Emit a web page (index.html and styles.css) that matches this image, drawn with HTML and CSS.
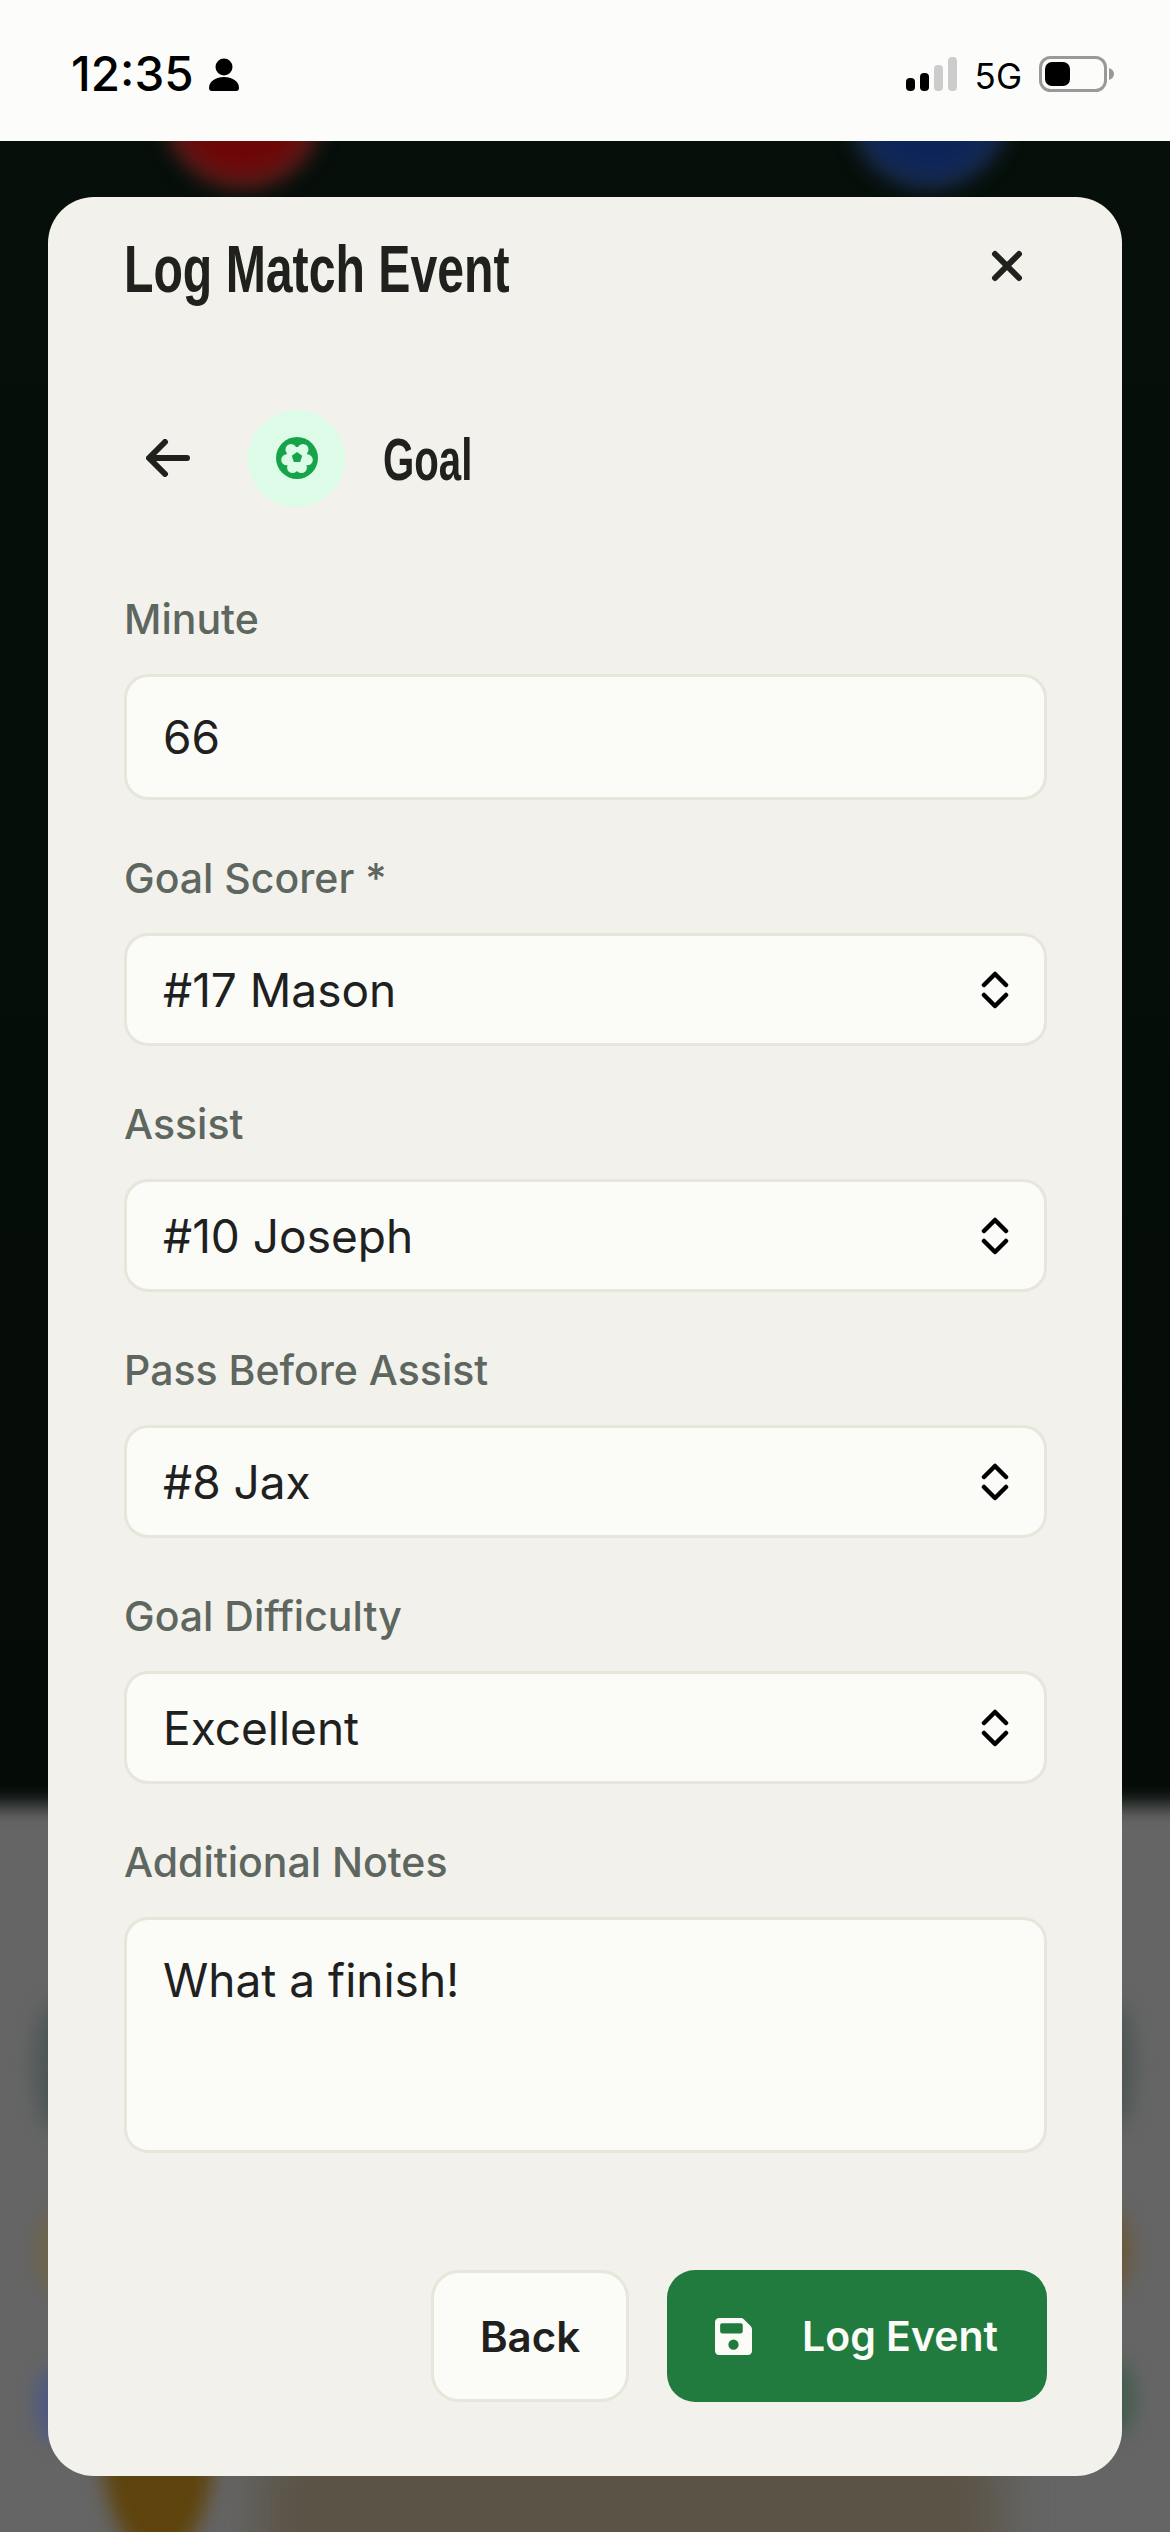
FILE: index.html
```html
<!DOCTYPE html>
<html lang="en">
<head>
  <meta charset="UTF-8">
  <meta name="viewport" content="width=device-width, initial-scale=1.0">
  <title>Log Match Event</title>
  <link rel="stylesheet" href="styles.css">
</head>
<body>
  <div class="status-bar">
    <div class="status-left">
      <span class="time">12:35</span>
      <svg class="person" viewBox="0 0 30 34"><circle cx="15" cy="9" r="8.5"/><path d="M0 30c0-7 7-11 15-11s15 4 15 11c0 2-1 3-3 3H3c-2 0-3-1-3-3z"/></svg>
    </div>
    <div class="status-right">
      <svg class="signal" viewBox="0 0 51 34"><rect x="0" y="21" width="9" height="13" rx="4"/><rect x="14" y="16" width="9" height="18" rx="4"/><rect class="off" x="28" y="8" width="9" height="26" rx="4"/><rect class="off" x="42" y="0" width="9" height="34" rx="4"/></svg>
      <span class="network">5G</span>
      <svg class="battery" viewBox="0 0 76 36"><rect x="1.5" y="1.5" width="65" height="33" rx="10" fill="none" stroke="#999" stroke-width="3"/><rect x="6" y="6" width="25" height="24" rx="7" fill="#000"/><path d="M70 12c3 1 5 3 5 6s-2 5-5 6z" fill="#999"/></svg>
    </div>
  </div>

  <div class="backdrop">
    <div class="blob blob-red"></div>
    <div class="blob blob-blue"></div>
    <div class="backdrop-light"></div>
    <div class="blob blob-amber"></div>
    <div class="blob blob-brown"></div>
    <div class="blob blob-left"></div>
    <div class="blob blob-left-tan"></div>
    <div class="blob blob-indigo"></div>
    <div class="blob blob-right"></div>
    <div class="blob blob-right-tan"></div>
    <div class="blob blob-green"></div>
  </div>

  <div class="modal">
    <div class="modal-head">
      <h1>Log Match Event</h1>
      <svg class="close" viewBox="0 0 32 32"><path d="M4 4l24 24M28 4L4 28"/></svg>
    </div>

    <div class="event-type">
      <svg class="back-arrow" viewBox="0 0 44 38"><path d="M41 19H4M19 3L3 19l16 16"/></svg>
      <div class="event-icon">
        <svg viewBox="0 0 42 42">
          <circle cx="21" cy="21" r="21" fill="#16a34a"/>
          <g fill="#dcfce7">
            <circle cx="21" cy="21" r="11"/>
            <circle cx="15" cy="12.4" r="5.5"/>
            <circle cx="27" cy="12.4" r="5.5"/>
            <circle cx="31.3" cy="22.8" r="5.5"/>
            <circle cx="25.4" cy="30.5" r="5.5"/>
            <circle cx="16.6" cy="30.5" r="5.5"/>
            <circle cx="10.7" cy="22.8" r="5.5"/>
          </g>
          <path d="M21 15l5.2 3.8-2 6.2h-6.4l-2-6.2z" fill="#16a34a"/>
        </svg>
      </div>
      <h2>Goal</h2>
    </div>

    <form class="event-form">
      <div class="field">
        <label>Minute</label>
        <div class="control control-input">66</div>
      </div>
      <div class="field">
        <label>Goal Scorer *</label>
        <div class="control control-select"><span>#17 Mason</span>
          <svg class="chevrons" viewBox="0 0 28 38"><path d="M3 14L14 3l11 11M3 24l11 11 11-11"/></svg>
        </div>
      </div>
      <div class="field">
        <label>Assist</label>
        <div class="control control-select"><span>#10 Joseph</span>
          <svg class="chevrons" viewBox="0 0 28 38"><path d="M3 14L14 3l11 11M3 24l11 11 11-11"/></svg>
        </div>
      </div>
      <div class="field">
        <label>Pass Before Assist</label>
        <div class="control control-select"><span>#8 Jax</span>
          <svg class="chevrons" viewBox="0 0 28 38"><path d="M3 14L14 3l11 11M3 24l11 11 11-11"/></svg>
        </div>
      </div>
      <div class="field">
        <label>Goal Difficulty</label>
        <div class="control control-select"><span>Excellent</span>
          <svg class="chevrons" viewBox="0 0 28 38"><path d="M3 14L14 3l11 11M3 24l11 11 11-11"/></svg>
        </div>
      </div>
      <div class="field">
        <label>Additional Notes</label>
        <div class="control control-textarea">What a finish!</div>
      </div>
    </form>

    <div class="actions">
      <button class="btn btn-back" type="button">Back</button>
      <button class="btn btn-log" type="button">
        <svg class="save" viewBox="0 0 36 36"><path fill-rule="evenodd" d="M4 0h21c1.200 0 2.200.5 3 1.200l6.800 6.800c.8.8 1.200 1.800 1.200 3V32c0 2.200-1.800 4-4 4H4c-2.200 0-4-1.800-4-4V4c0-2.200 1.800-4 4-4zm3 5c-1.200 0-2 .8-2 2v6c0 1.200.8 2 2 2h18c1.200 0 2-.8 2-2V7c0-1.200-.8-2-2-2zm11 16a5 5 0 1 0 0 10 5 5 0 0 0 0-10z"/></svg>
        <span>Log Event</span>
      </button>
    </div>
  </div>
</body>
</html>
```

FILE: styles.css
```css
* {
    box-sizing: border-box;
}

html, body {
    margin: 0;
    padding: 0;
}

body {
    width: 1170px;
    height: 2532px;
    overflow: hidden;
    position: relative;
    font-family: Inter, "Noto Sans", sans-serif;
    background-color: #656565;
    color: #20211e;
}

.status-bar {
    position: relative;
    z-index: 3;
    height: 141px;
    background-color: #fcfcfa;
    padding: 52px 55px 0 71px;
    display: flex;
    justify-content: space-between;
    color: #000;
}

.status-left,
.status-right {
    display: flex;
    align-items: flex-start;
}

.time {
    font-size: 47.5px;
    font-weight: 500;
    line-height: 44px;
}

.person {
    width: 30px;
    height: 34px;
    margin: 6px 0 0 15px;
    fill: #000;
}

.signal {
    width: 51px;
    height: 34px;
    margin: 5px 0 0 0;
    fill: #000;
}

.signal .off {
    fill: #ccc;
}

.network {
    font-size: 35px;
    line-height: 40px;
    margin: 4px 0 0 18px;
}

.battery {
    width: 76px;
    height: 36px;
    margin: 4px 0 0 17px;
}

.backdrop {
    position: absolute;
    inset: 141px 0 0 0;
    overflow: hidden;
    background: linear-gradient(#060f0a, #050c08 70%, #000);
}

.backdrop-light {
    position: absolute;
    left: -40px;
    right: -40px;
    top: 1664px;
    bottom: -40px;
    background-color: #656565;
    filter: blur(10px);
}

.blob {
    position: absolute;
    filter: blur(10px);
    border-radius: 50%;
}

.blob-red {
    left: 163px;
    top: -112px;
    width: 160px;
    height: 160px;
    background: radial-gradient(circle, #6d0606 50%, #4c3c38 85%);
}

.blob-blue {
    left: 849px;
    top: -112px;
    width: 160px;
    height: 160px;
    background: radial-gradient(circle, #0c2458 50%, #2d3a4c 85%);
}

.blob-amber {
    left: 100px;
    top: 2159px;
    width: 116px;
    height: 260px;
    background-color: #5e430c;
}

.blob-brown {
    left: 260px;
    top: 2300px;
    width: 740px;
    height: 200px;
    border-radius: 20px;
    background-color: #5b5346;
    filter: blur(24px);
}

.blob-left {
    left: 34px;
    top: 1860px;
    width: 44px;
    height: 130px;
    background-color: #4c5655;
}

.blob-left-tan {
    left: 38px;
    top: 2070px;
    width: 36px;
    height: 80px;
    background-color: #6f6345;
}

.blob-indigo {
    left: 36px;
    top: 2226px;
    width: 44px;
    height: 76px;
    background-color: #4c5884;
}

.blob-right {
    left: 1096px;
    top: 1860px;
    width: 38px;
    height: 130px;
    background-color: #4c5655;
}

.blob-right-tan {
    left: 1096px;
    top: 2070px;
    width: 34px;
    height: 80px;
    background-color: #6b5733;
}

.blob-green {
    left: 1096px;
    top: 2220px;
    width: 38px;
    height: 76px;
    background-color: #3f5c4c;
}

.modal {
    position: absolute;
    z-index: 2;
    left: 48px;
    top: 197px;
    width: 1074px;
    height: 2279px;
    background-color: #f2f1eb;
    border-radius: 46px;
    padding: 0 75px 0 76px;
}

.modal-head {
    display: flex;
    justify-content: space-between;
    align-items: flex-start;
    height: 178px;
}

h1 {
    margin: 34px 0 0 0;
    font-family: "Liberation Sans", sans-serif;
    font-size: 66px;
    line-height: 76px;
    font-weight: 700;
    color: #20211e;
    white-space: nowrap;
    transform: scaleX(0.73);
    transform-origin: left center;
}

.close {
    width: 32px;
    height: 32px;
    margin: 53px 24px 0 0;
    fill: none;
    stroke: #20211e;
    stroke-width: 6;
    stroke-linecap: round;
}

.event-type {
    display: flex;
    align-items: center;
    height: 96px;
    margin-top: 35px;
}

.back-arrow {
    width: 44px;
    height: 38px;
    margin-left: 22px;
    fill: none;
    stroke: #20211e;
    stroke-width: 6;
    stroke-linecap: round;
    stroke-linejoin: round;
}

.event-icon {
    width: 97px;
    height: 97px;
    margin-left: 58px;
    border-radius: 50%;
    background-color: #dcfce7;
    display: flex;
    align-items: center;
    justify-content: center;
}

.event-icon svg {
    width: 42px;
    height: 42px;
}

h2 {
    margin: 4px 0 0 38px;
    font-family: "Liberation Sans", sans-serif;
    font-size: 60px;
    line-height: 70px;
    font-weight: 700;
    color: #20211e;
    transform: scaleX(0.67);
    transform-origin: left center;
}

.event-form {
    margin-top: 35px;
    display: flex;
    flex-direction: column;
}

.field {
    display: flex;
    flex-direction: column;
}

label {
    display: block;
    padding: 54px 0 31px 0;
    font-size: 41px;
    line-height: 48px;
    font-weight: 500;
    color: #5e6660;
}

.control {
    width: 923px;
    background-color: #fbfbf8;
    border: 3px solid #e7e6da;
    border-radius: 24px;
    font-size: 46px;
    color: #20211e;
    padding: 0 36px;
    display: flex;
    align-items: center;
    justify-content: space-between;
}

.control-input {
    height: 126px;
}

.control-select {
    height: 113px;
}

.control-textarea {
    height: 236px;
    align-items: flex-start;
    padding-top: 32px;
    line-height: 56px;
}

.chevrons {
    width: 28px;
    height: 38px;
    margin-right: -1px;
    fill: none;
    stroke: #000;
    stroke-width: 4.5;
    stroke-linecap: round;
    stroke-linejoin: round;
}

.actions {
    display: flex;
    justify-content: flex-end;
    gap: 38px;
    margin-top: 117px;
}

.btn {
    height: 132px;
    border-radius: 28px;
    font-family: Inter, "Noto Sans", sans-serif;
    font-size: 42px;
    font-weight: 600;
    display: flex;
    align-items: center;
}

.btn-back {
    width: 198px;
    justify-content: center;
    background-color: #fbfbf8;
    border: 3px solid #e7e6da;
    color: #20211e;
}

.btn-log {
    width: 380px;
    padding: 0 0 0 48px;
    font-size: 41px;
    background-color: #217a3e;
    border: none;
    color: #fbfbf8;
}

.save {
    width: 37px;
    height: 37px;
    fill: #fbfbf8;
    margin-right: 50px;
}
```
